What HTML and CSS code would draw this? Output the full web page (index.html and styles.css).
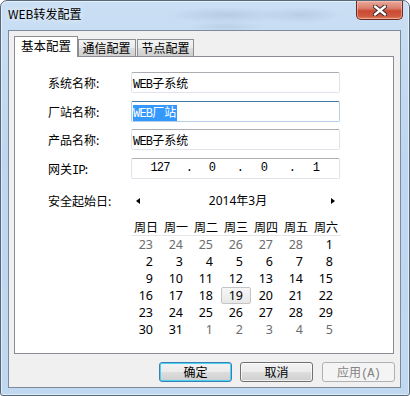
FILE: index.html
```html
<!DOCTYPE html>
<html>
<head>
<meta charset="utf-8">
<link rel="stylesheet" href="styles.css">
</head>
<body>
<div class="window">
  <div class="titlebar">
    <span class="title">WEB转发配置</span>
    <div class="close">
      <svg width="14" height="11" viewBox="0 0 14 11">
        <path d="M2 1.5 L12 9.5 M12 1.5 L2 9.5" stroke="#3a2a2a" stroke-width="4.4" stroke-linecap="round"/>
        <path d="M2 1.5 L12 9.5 M12 1.5 L2 9.5" stroke="#ffffff" stroke-width="2.4" stroke-linecap="round"/>
      </svg>
    </div>
  </div>
  <div class="client">
    <div class="tabs">
      <div class="tab active">基本配置</div>
      <div class="tab t2">通信配置</div>
      <div class="tab t3">节点配置</div>
    </div>
    <div class="pane">
      <div class="form">
        <div class="lbl">系统名称:</div>
        <div class="field"><span class="latin">WEB</span>子系统</div>
        <div class="lbl">厂站名称:</div>
        <div class="field focus"><span class="sel"><span class="latin">WEB</span>厂站</span></div>
        <div class="lbl">产品名称:</div>
        <div class="field"><span class="latin">WEB</span>子系统</div>
        <div class="lbl">网关<span class="latin">IP</span>:</div>
        <div class="field ip">
          <span></span><span>127</span><span>.</span><span>0</span><span>.</span><span>0</span><span>.</span><span>1</span>
        </div>
        <div class="lbl cal-lbl">安全起始日:</div>
        <div class="cal">
          <div class="cal-head">
            <span class="arrow left"></span>
            <span class="month">2014年3月</span>
            <span class="arrow right"></span>
          </div>
          <div class="days">
            <span>周日</span><span>周一</span><span>周二</span><span>周三</span><span>周四</span><span>周五</span><span>周六</span>
          </div>
          <div class="grid">
            <span class="o">23</span><span class="o">24</span><span class="o">25</span><span class="o">26</span><span class="o">27</span><span class="o">28</span><span>1</span>
            <span>2</span><span>3</span><span>4</span><span>5</span><span>6</span><span>7</span><span>8</span>
            <span>9</span><span>10</span><span>11</span><span>12</span><span>13</span><span>14</span><span>15</span>
            <span>16</span><span>17</span><span>18</span><span class="today">19</span><span>20</span><span>21</span><span>22</span>
            <span>23</span><span>24</span><span>25</span><span>26</span><span>27</span><span>28</span><span>29</span>
            <span>30</span><span>31</span><span class="o">1</span><span class="o">2</span><span class="o">3</span><span class="o">4</span><span class="o">5</span>
          </div>
        </div>
      </div>
    </div>
    <div class="buttons">
      <div class="btn default">确定</div>
      <div class="btn">取消</div>
      <div class="btn disabled">应用<span class="latin">(A)</span></div>
    </div>
  </div>
</div>
</body>
</html>
```
FILE: styles.css
```css
html, body {
  margin: 0;
  padding: 0;
  background: #ffffff;
}
body {
  font-family: "Noto Sans CJK SC", "Noto Sans", sans-serif;
  font-size: 12px;
  color: #000;
}
.window {
  width: 410px;
  height: 396px;
  box-sizing: border-box;
  border: 1px solid #56677a;
  border-radius: 7px 7px 3px 3px;
  background:
    radial-gradient(ellipse 60px 8px at 225px 14px, rgba(120,140,170,0.22), rgba(120,140,170,0) 100%),
    radial-gradient(ellipse 40px 8px at 300px 14px, rgba(120,140,170,0.2), rgba(120,140,170,0) 100%),
    radial-gradient(ellipse 40px 6px at 225px 26px, rgba(120,140,170,0.16), rgba(120,140,170,0) 100%),
    linear-gradient(180deg, #cadff4 0%, #bed6ef 40%, #c0d8f0 100%);
  box-shadow: inset 0 0 0 1px rgba(255,255,255,0.55);
  display: flex;
  flex-direction: column;
  overflow: hidden;
}
.titlebar {
  height: 29px;
  flex: none;
  display: flex;
  justify-content: space-between;
  align-items: flex-start;
}
.title {
  margin: 4px 0 0 7px;
  line-height: 18px;
  font-size: 12px;
  color: #000;
  text-shadow: 0 0 6px rgba(255,255,255,0.9);
}
.close {
  width: 47px;
  height: 19px;
  margin-right: 6px;
  box-sizing: border-box;
  border: 1px solid #6b2b22;
  border-top: none;
  border-radius: 0 0 5px 5px;
  background: linear-gradient(180deg, #e9a99c 0%, #dc7f6e 40%, #c94a34 55%, #cf5a3f 85%, #e28a68 100%);
  box-shadow: inset 0 0 0 1px rgba(255,210,200,0.5);
  display: flex;
  align-items: center;
  justify-content: center;
}
.client {
  height: 358px;
  flex: none;
  margin: 0 8px 0 7px;
  box-sizing: border-box;
  border: 1px solid #7c8b9b;
  background: #f0f0f0;
  display: flex;
  flex-direction: column;
}
.tabs {
  display: flex;
  align-items: flex-end;
  height: 21px;
  margin: 5px 0 -1px 5px;
  position: relative;
  z-index: 1;
}
.tab {
  box-sizing: border-box;
  height: 17px;
  margin-bottom: 1px;
  border: 1px solid #8c8e94;
  border-bottom: none;
  background: linear-gradient(180deg, #f3f3f3 0%, #ebebeb 50%, #dddddd 51%, #cfcfcf 100%);
  text-align: center;
  line-height: 16px;
  font-size: 12px;
  color: #000;
}
.tab.active {
  width: 64px;
  height: 21px;
  margin-bottom: 0;
  background: #ffffff;
  line-height: 18px;
  font-size: 12.5px;
}
.tab.t2 {
  width: 58px;
  margin-left: -0.5px;
}
.tab.t3 {
  width: 57px;
  margin-left: 1.5px;
}
.pane {
  width: 380px;
  height: 298px;
  box-sizing: border-box;
  margin-left: 5px;
  border: 1px solid #898c95;
  background: #ffffff;
}
.form {
  display: grid;
  grid-template-columns: 83px 209px;
  grid-auto-rows: 21px;
  row-gap: 7.5px;
  padding: 15px 0 0 33px;
}
.lbl {
  line-height: 21px;
  font-size: 12px;
}
.latin {
  font-family: "Liberation Mono", monospace;
  font-size: 12px;
  letter-spacing: -0.8px;
}
.field {
  box-sizing: border-box;
  height: 21px;
  border: 1px solid #e2e3ea;
  border-top-color: #abadb3;
  border-radius: 2px;
  padding: 0 0 0 1px;
  line-height: 19px;
  font-size: 12px;
  background: #fff;
}
.field.focus {
  border-color: #b5cfe7;
  border-top-color: #3d7bad;
}
.sel {
  background: #3399ff;
  color: #ffffff;
  display: inline-block;
  line-height: 14px;
  margin-top: 2px;
  padding-right: 1px;
}
.ip {
  display: grid;
  grid-template-columns: 4px 46px 12px 34px 22px 26px 30px 18px;
  text-align: center;
  font-family: "Liberation Mono", monospace;
  font-size: 12px;
  letter-spacing: -0.8px;
}
.cal-lbl {
  margin-top: 7px;
  line-height: 16px;
}
.cal {
  margin-top: 7px;
  width: 210px;
}
.cal-head {
  height: 16px;
  display: flex;
  align-items: center;
  justify-content: space-between;
  padding: 0 6px 0 5px;
}
.month {
  font-family: "Noto Sans", "Noto Sans CJK SC", sans-serif;
  font-size: 12px;
  line-height: 16px;
  margin-left: 5px;
}
.arrow {
  width: 0;
  height: 0;
  border-top: 3.5px solid transparent;
  border-bottom: 3.5px solid transparent;
}
.arrow.left {
  border-right: 4px solid #000;
}
.arrow.right {
  border-left: 4px solid #000;
}
.days {
  margin-top: 10px;
  display: grid;
  grid-template-columns: repeat(7, 30px);
  height: 16px;
  border-bottom: 1px solid #e6e6e6;
  line-height: 16px;
  text-align: center;
  font-size: 12px;
}
.grid {
  display: grid;
  grid-template-columns: repeat(7, 30px);
  grid-auto-rows: 17px;
  font-family: "Noto Sans", sans-serif;
  font-size: 12.5px;
  line-height: 17px;
  text-align: right;
}
.grid span {
  padding-right: 8px;
}
.grid .o {
  color: #6d6d6d;
}
.grid .today {
  box-sizing: border-box;
  border: 1px solid #c5c5c5;
  border-radius: 2px;
  background: linear-gradient(180deg, #f6f6f6, #e8e8e8);
  line-height: 15px;
  padding-right: 7px;
}
.buttons {
  display: flex;
  justify-content: flex-end;
  gap: 8px;
  margin: 8px 5px 0 0;
}
.btn {
  width: 73px;
  height: 20px;
  box-sizing: border-box;
  border: 1px solid #707070;
  border-radius: 3px;
  background: linear-gradient(180deg, #f2f2f2 0%, #ebebeb 50%, #dddddd 51%, #cfcfcf 100%);
  box-shadow: inset 0 0 0 1px rgba(255,255,255,0.7);
  text-align: center;
  line-height: 18px;
  font-size: 12px;
}
.btn.default {
  border-color: #3c7fb1;
  box-shadow: inset 0 0 0 1px #48d2f8;
}
.btn.disabled {
  border-color: #adb2b5;
  background: #f4f4f4;
  box-shadow: none;
  color: #838383;
  margin-left: 1px;
}
```
